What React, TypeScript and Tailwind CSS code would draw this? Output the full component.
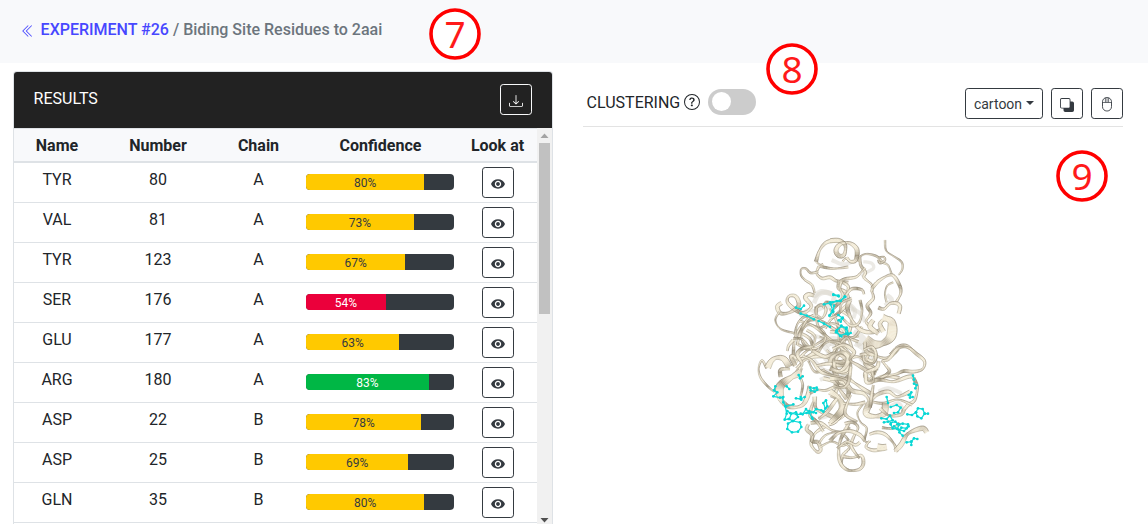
import React from "react";
import { BsChevronDoubleLeft, BsDownload, BsQuestionCircle, BsSubtract } from "react-icons/bs";
import { IoMdEye } from "react-icons/io";

type Row = { name: string; num: number; chain: string; conf: number };

const rows: Row[] = [
  { name: "TYR", num: 80, chain: "A", conf: 80 },
  { name: "VAL", num: 81, chain: "A", conf: 73 },
  { name: "TYR", num: 123, chain: "A", conf: 67 },
  { name: "SER", num: 176, chain: "A", conf: 54 },
  { name: "GLU", num: 177, chain: "A", conf: 63 },
  { name: "ARG", num: 180, chain: "A", conf: 83 },
  { name: "ASP", num: 22, chain: "B", conf: 78 },
  { name: "ASP", num: 25, chain: "B", conf: 69 },
  { name: "GLN", num: 35, chain: "B", conf: 80 },
];

const columns = "grid grid-cols-[86px_116px_85px_159px_77px]";

function barColor(conf: number) {
  if (conf > 80) return "bg-[#00b745] text-white";
  if (conf < 60) return "bg-[#eb003b] text-white";
  return "bg-[#ffc900] text-[#343a40]";
}

function Badge({ n, place }: { n: number; place: string }) {
  return (
    <svg width="52" height="52" viewBox="0 0 52 52" className={`absolute ${place}`}>
      <circle cx="26" cy="26" r="24" fill="white" stroke="#ff0000" strokeWidth="3.6" />
      <text
        x="26"
        y="40"
        textAnchor="middle"
        fill="#ff1a1a"
        className="font-['Noto_Sans',sans-serif] text-[37px]"
      >
        {n}
      </text>
    </svg>
  );
}

function MouseIcon() {
  return (
    <svg width="10" height="15" viewBox="0 0 10 15" fill="none" stroke="#343a40" strokeWidth="0.9" className="mt-[2px]">
      <rect x="0.5" y="0.5" width="9" height="13.5" rx="4.3" />
      <path d="M0.5 5.5h9M5 0.5v5M3.4 1v4.4M6.6 1v4.4" strokeWidth="0.7" />
    </svg>
  );
}

/* Ribbon: control points and width, in thirds of a pixel within a tile. */
type Ribbon = [string, number];
type Tile = { x: number; y: number; faint: Ribbon[]; ribbons: Ribbon[]; residues: string[] };

const tiles: Tile[] = [
  {
    x: 150,
    y: 195,
    faint: [
      ["100,165 120,195 105,215", 16],
      ["195,160 225,180 210,205", 16],
      ["140,290 175,305 165,325", 14],
      ["70,20 95,5 125,12", 16],
      ["175,40 195,60 190,85", 12],
      ["120,160 150,170 185,165", 12],
    ],
    ribbons: [
      ["150,60 182,86 176,130 150,150", 7],
      ["130,320 146,280 134,240 142,200 168,190 178,212 160,224 144,212", 12],
      ["134,236 160,248 178,236 176,212", 12],
      ["136,262 160,274 178,260", 14],
      ["160,280 176,300 172,328", 10],
      ["10,200 16,140 48,96 82,90", 7],
      ["78,50 84,108 118,150 150,168", 7],
      ["20,236 50,206 100,200 148,216 200,200 232,218 262,242", 8],
      ["88,140 130,152 172,148 206,138", 5],
      ["8,228 42,190 78,164 112,144", 6],
      ["110,180 132,208 120,242", 4],
      ["164,150 158,200", 4],
      ["150,150 152,196", 4],
      ["55,212 74,245 104,240", 6],
      ["238,190 226,222 250,240 242,266 226,262 230,244 258,250", 9],
      ["236,180 256,194 250,215 232,208", 10],
      ["210,196 240,192 290,205 326,176", 8],
      ["246,274 290,260 328,264", 8],
      ["178,268 222,298 252,316", 9],
      ["100,240 132,262 150,292", 6],
      ["30,128 62,150 70,196", 7],
      ["18,160 60,178 75,140 50,120", 6],
      ["40,104 70,85 104,98 150,130 190,142 216,110", 6],
    ],
    residues: [],
  },
  {
    x: 0,
    y: 0,
    faint: [
      ["222,235 235,210 262,202 282,215 270,240 245,248 222,260", 14],
      ["180,275 205,255 230,262", 12],
      ["250,350 280,340 310,350", 14],
      ["212,330 245,340 270,365", 12],
    ],
    ribbons: [
      ["240,124 280,131 325,126", 6],
      ["228,110 240,74 262,51 298,48 316,58", 9],
      ["237,124 230,145 246,160 270,157 290,168 325,172", 8],
      ["228,110 240,120 250,118", 6],
      ["224,204 216,180 195,165 183,150 184,132 198,131 212,144 235,140", 5],
      ["125,234 112,245 122,265 150,262 176,242 168,215 148,213 142,230 160,250 190,264 214,244 196,218 206,208 222,212", 10],
      ["120,258 106,285 122,312 165,325", 4],
      ["165,330 172,298 195,275 230,282 262,300 300,322", 6],
      ["190,310 210,300 248,318 255,346 228,370 195,362 183,330 190,310", 6],
      ["228,270 230,248 245,240 258,254 248,278 232,272", 7],
      ["298,165 296,190 318,202 326,230 300,260 274,282 255,310", 8],
      ["304,170 325,186 312,215 285,235 258,232 250,250", 7],
      ["160,345 146,362 142,378", 8],
      ["178,288 215,300 262,335 318,380", 6],
      ["268,250 290,290 296,340 280,385", 6],
      ["172,360 180,325 200,285 222,270", 7],
      ["232,388 255,355 288,350 325,362", 5],
      ["160,340 190,345 225,390", 5],
      ["240,310 275,295 305,310 326,342", 6],
      ["308,110 317,100 328,106", 6],
    ],
    residues: [
      "168,248 182,252 192,242",
      "182,266 200,272 222,283",
      "280,210 296,214",
      "252,238 278,232 298,228 316,216",
      "272,238 278,256 268,272",
      "236,288 252,296 270,306",
      "290,316 304,304 320,308 324,326",
      "288,322 304,334",
      "296,286 308,278",
    ],
  },
  {
    x: 270,
    y: 0,
    faint: [
      ["5,105 40,118 70,108", 12],
      ["100,110 125,115 130,130 105,145 95,155", 10],
      ["170,210 185,225 165,242", 14],
      ["70,320 100,342 80,360", 18],
      ["65,250 90,265 105,290", 12],
      ["25,210 50,230 72,260", 12],
    ],
    ribbons: [
      ["0,47 28,47 46,62 42,90 26,92 18,76 30,58 58,54 80,72 78,105 62,110 50,98", 11],
      ["165,45 168,76 188,92 214,110 217,132 206,150", 4],
      ["84,110 92,94 110,87 140,94 158,112 175,122 186,152", 5],
      ["145,98 162,96 164,107 150,114 146,104", 6],
      ["90,95 92,120 106,142 102,158 126,180 125,200", 7],
      ["28,170 45,162 78,156 95,140 105,128", 7],
      ["126,190 150,165 186,150 208,180 212,205 198,232", 8],
      ["170,232 165,206 172,182 190,172", 4],
      ["34,170 30,190 40,215 25,235 10,250", 8],
      ["125,198 130,220 112,242 122,265 108,290 126,308", 8],
      ["45,215 65,192 95,194 102,208", 7],
      ["60,225 52,250 66,285 92,315 130,322 158,308", 10],
      ["90,225 96,260 86,295 62,302 40,282", 6],
      ["145,248 162,252 180,236 200,235 210,245 206,266", 9],
      ["158,278 184,290 184,332 160,354 130,358 106,344", 25],
      ["158,285 150,298 160,320", 12],
      ["130,285 120,305 145,326", 12],
      ["0,320 38,326 64,342 85,350", 7],
      ["0,280 28,265 35,235 65,220", 6],
      ["15,388 34,352 54,340 72,388", 6],
      ["180,388 204,366 230,363 260,388", 8],
      ["105,350 108,378 128,390", 9],
      ["0,350 30,355 62,388", 5],
    ],
    residues: [
      "10,208 25,212",
      "0,232 20,228 32,228 44,214",
      "0,270 10,260 12,242",
      "25,270 38,280 32,290",
      "20,318 34,302 48,312 48,326 30,332 20,318",
      "54,328 62,324",
    ],
  },
  {
    x: 0,
    y: 360,
    faint: [
      ["220,45 250,75 285,80", 14],
      ["285,55 320,75 300,105", 18],
      ["235,220 270,210", 14],
      ["240,105 276,90 312,92", 12],
    ],
    ribbons: [
      ["166,62 154,34 180,42 205,34 236,16", 10],
      ["80,70 66,46 56,70 62,98 84,125 104,142", 5],
      ["83,68 94,48 110,38 132,42 148,66", 16],
      ["170,80 186,58 172,30 185,12 215,5", 9],
      ["186,70 180,92 188,120 182,154", 5],
      ["122,160 120,125 150,100 182,82", 21],
      ["118,160 140,182 166,187 190,178 204,150 209,123", 11],
      ["122,96 122,74 150,72", 9],
      ["210,145 232,135 258,136 298,122 326,130", 7],
      ["190,34 215,46 242,80 280,92 326,105", 8],
      ["230,62 268,56 305,62 328,50", 8],
      ["220,18 255,35 285,24 318,44 320,76 288,80 282,50", 9],
      ["250,100 282,110 300,135 320,162", 9],
      ["224,155 228,190 260,207 294,220 320,205", 10],
      ["275,148 298,165 306,192 284,228 266,238", 17],
      ["236,222 262,200 284,170 300,150", 9],
      ["205,238 200,254 216,270 214,300 232,321 242,314 234,292 216,288 226,264 258,242", 9],
      ["212,234 242,234 276,256 308,262 328,246", 8],
      ["236,296 258,270 300,262 326,286", 5],
      ["240,306 275,290 306,302 326,292", 5],
      ["310,292 328,308 309,330 304,360 326,375", 7],
      ["220,170 210,210 230,230 250,260", 8],
    ],
    residues: [
      "106,124 102,136 112,142 100,154 120,158 130,156",
      "128,158 130,172 138,184 160,178",
      "136,184 140,206 134,224 148,222 154,206 168,202 174,216 160,228 146,222",
      "158,228 144,236 142,252 156,262 174,260 184,246 180,232 158,228",
      "142,198 150,204 170,208 188,208 198,192 208,204 216,218 218,222",
      "182,206 200,204 220,202 228,192 244,196 250,200 262,184 258,166 250,174 256,190",
      "168,160 182,162 194,156",
      "182,156 184,164",
      "210,128 222,130 230,128",
      "212,136 224,140 232,134",
      "140,124 148,132",
      "176,90 180,100 188,94",
      "208,198 228,204",
    ],
  },
  {
    x: 270,
    y: 360,
    faint: [
      ["10,130 42,115 50,85", 14],
      ["100,5 122,5 130,32 110,55 90,40", 12],
      ["145,140 175,130 215,145", 12],
      ["180,185 205,175 220,195", 12],
    ],
    ribbons: [
      ["132,104 152,100 178,80 166,60 158,48 176,42 204,10 234,8 260,27 283,48 278,72 250,80 222,78 196,88 160,94 132,106", 8],
      ["120,112 150,104 190,110 232,96 252,94", 9],
      ["250,98 262,128 254,165 234,180 218,200", 8],
      ["0,70 28,78 48,62 54,36 35,22 8,35 0,52", 11],
      ["8,12 40,0 72,20 60,44 86,62 115,80 130,94", 9],
      ["100,15 126,6 138,28 130,54 104,50 100,30", 7],
      ["110,80 140,68 146,48", 9],
      ["108,88 110,112 130,108 126,80", 9],
      ["0,100 42,106 65,136 102,146 120,170", 11],
      ["10,122 38,128 55,112 62,66", 8],
      ["120,174 140,150 175,140 202,155 240,140", 9],
      ["124,170 160,175 204,164 246,180", 6],
      ["120,172 108,205 132,214 162,206 166,174", 16],
      ["98,178 82,204 92,232 110,250 104,288 122,290", 4],
      ["0,140 28,160 38,190 12,222 0,232", 16],
      ["40,175 75,178 106,172", 8],
      ["130,120 125,150 120,188", 8],
      ["56,236 30,290 28,344 50,374 86,374 100,356 94,332 66,338 38,334", 8],
      ["44,236 68,232 84,248 70,278 64,304 88,340", 7],
      ["0,288 24,265 58,258 90,270 104,288", 9],
      ["22,310 50,290 76,300 90,292", 7],
      ["118,288 108,306 132,316 166,310", 8],
      ["118,268 142,262 168,270 194,300 198,320", 8],
      ["196,318 214,298 230,270 254,256 280,250 290,262", 12],
      ["142,306 156,308 170,306", 17],
      ["150,190 178,212 214,208 222,192", 8],
      ["156,248 188,250 210,235", 8],
      ["82,230 45,205 62,150", 7],
    ],
    residues: [
      "249,92 252,104",
      "252,116 260,120 256,130",
      "236,150 244,142 240,158 248,156",
      "170,156 174,174",
      "182,186 200,180 212,188 204,202 192,204",
      "232,208 246,210 258,202 264,190 278,192 284,206 274,220 262,214 258,202",
      "284,206 294,206",
      "154,220 170,222 180,212 188,226 174,230 162,232",
      "182,234 196,230 208,238 202,252 188,250 182,238",
      "202,238 218,236 234,238 230,250 214,248 208,262 218,272",
      "192,244 206,254 222,258 236,244",
      "230,292 244,290 252,280 262,282",
      "244,290 244,300",
    ],
  },
];

/* Catmull-Rom samples along the control points. */
function sample(points: string): number[][] {
  const p = points.split(" ").map((s) => s.split(",").map(Number));
  const out: number[][] = [];
  for (let i = 0; i < p.length - 1; i++) {
    const a = p[Math.max(i - 1, 0)];
    const b = p[i];
    const c = p[i + 1];
    const e = p[Math.min(i + 2, p.length - 1)];
    const n = Math.max(4, Math.round(Math.hypot(c[0] - b[0], c[1] - b[1]) / 4));
    for (let k = 0; k < n; k++) {
      const t = k / n;
      out.push(
        [0, 1].map(
          (j) =>
            0.5 *
            (2 * b[j] +
              (c[j] - a[j]) * t +
              (2 * a[j] - 5 * b[j] + 4 * c[j] - e[j]) * t * t +
              (3 * b[j] - a[j] - 3 * c[j] + e[j]) * t * t * t),
        ),
      );
    }
  }
  out.push(p[p.length - 1]);
  return out;
}

const line = (pts: number[][]) => "M" + pts.map((q) => `${q[0].toFixed(1)} ${q[1].toFixed(1)}`).join("L");

function mix(v: number) {
  const dark = [138, 128, 106];
  const light = [244, 236, 217];
  return `rgb(${dark.map((d, i) => Math.round(d + (light[i] - d) * v)).join(",")})`;
}

/* A band that twists: its width and its shade change along the curve. */
function RibbonPath({ ribbon, seed }: { ribbon: Ribbon; seed: number }) {
  const [points, w] = ribbon;
  const pts = sample(points);
  const left: number[][] = [];
  const right: number[][] = [];
  const tone: number[] = [];
  let s = seed * 17;
  pts.forEach((q, i) => {
    const a = pts[Math.max(i - 1, 0)];
    const b = pts[Math.min(i + 1, pts.length - 1)];
    const len = Math.hypot(b[0] - a[0], b[1] - a[1]) || 1;
    s += len / 2;
    const nx = -(b[1] - a[1]) / len;
    const ny = (b[0] - a[0]) / len;
    const h = (w / 2) * (0.6 + 0.55 * Math.abs(Math.cos(s / 30)));
    left.push([q[0] + nx * h, q[1] + ny * h]);
    right.push([q[0] - nx * h, q[1] - ny * h]);
    const v = 0.5 + 0.5 * Math.sin(s / 13) * Math.cos(s / 31);
    tone.push(Math.min(1, 0.2 + Math.sqrt(v)));
  });
  return (
    <g>
      {left.slice(1).map((q, i) => (
        <path
          key={i}
          d={line([left[i], q, right[i + 1], right[i]]) + "Z"}
          fill={mix(tone[i])}
          stroke={mix(tone[i])}
          strokeWidth="0.7"
        />
      ))}
      <path d={line(left)} stroke="#80765f" strokeWidth="1.4" strokeOpacity="0.75" />
      <path d={line(right)} stroke="#6f6653" strokeWidth="1.8" strokeOpacity="0.8" />
    </g>
  );
}

function Protein() {
  return (
    <svg width="200" height="255" viewBox="0 0 600 765" fill="none" strokeLinejoin="round">
      {tiles.map((t, i) => (
        <g key={i} transform={`translate(${t.x} ${t.y})`}>
          {t.faint.map(([pts, w], k) => (
            <path key={k} d={line(sample(pts))} stroke="#d9d5cc" strokeOpacity="0.5" strokeWidth={w} />
          ))}
        </g>
      ))}
      {tiles.map((t, i) => (
        <g key={i} transform={`translate(${t.x} ${t.y})`}>
          {t.ribbons.map((r, k) => (
            <RibbonPath key={k} ribbon={r} seed={k + i * 5} />
          ))}
        </g>
      ))}
      {tiles.map((t, i) => (
        <g key={i} transform={`translate(${t.x} ${t.y})`}>
          {t.residues.map((pts, k) => (
            <g key={k}>
              <polyline points={pts} stroke="#0fdcd9" strokeWidth="3.8" />
              {pts.split(" ").map((s, j) => {
                const [cx, cy] = s.split(",");
                return <circle key={j} cx={cx} cy={cy} r="4" fill="#08d6d4" />;
              })}
            </g>
          ))}
        </g>
      ))}
    </svg>
  );
}

const outlineButton =
  "flex h-[31px] items-center justify-center rounded-[3.2px] border border-[#343a40] text-[#343a40]";

export default function App() {
  return (
    <div className="relative flex h-[524px] w-[1148px] flex-col overflow-hidden bg-white font-['Roboto',sans-serif] text-base text-[#212529]">
      <header className="flex h-[63px] shrink-0 items-start bg-[#f8f9fb] pl-[21px] pt-[18px] font-medium leading-6 text-[#6c757d]">
        <BsChevronDoubleLeft className="mr-[5.6px] mt-[6px] size-[14px] text-[#4747ff]" />
        <span className="text-[#4747ff]">EXPERIMENT #26</span>
        <span className="whitespace-pre"> / Biding Site Residues to 2aai</span>
      </header>

      <main className="flex min-h-0 flex-1 pl-[13px] pt-2">
        <section className="flex w-[540px] shrink-0 flex-col overflow-hidden rounded-t-[4px] border border-b-0 border-[#dee2e6]">
          <div className="flex h-14 shrink-0 items-center justify-between bg-[#222] pl-[19.6px] pr-5 text-white">
            <span className="-mt-0.5">RESULTS</span>
            <button className="-mt-px flex h-[31px] w-8 items-center justify-center rounded-[3.2px] border border-[#f8f9fa]">
              <BsDownload className="mt-[3px] size-[14px]" />
            </button>
          </div>
          <div className="flex min-h-0 flex-1">
            <div className="w-[523px] shrink-0 overflow-hidden text-center leading-6">
              <div className={`${columns} h-[35px] border-b-2 border-t border-[#dee2e6] bg-[#f8f9fb] pt-[5px] font-bold`}>
                <span>Name</span>
                <span>Number</span>
                <span>Chain</span>
                <span>Confidence</span>
                <span className="-ml-0.5">Look at</span>
              </div>
              {rows.map((r, i) => (
                <div key={i} className={`${columns} h-10 border-b border-[#dee2e6] pt-[4px]`}>
                  <span className="mt-px">{r.name}</span>
                  <span className="mt-px">{r.num}</span>
                  <span className="mt-px">{r.chain}</span>
                  <div className="pl-[5px] pr-1.5 pt-[7px]">
                    <div className="flex h-4 overflow-hidden rounded-[4px] bg-[#343a40]">
                      <div
                        className={`flex items-center justify-center text-xs leading-none ${barColor(r.conf)}`}
                        style={{ width: `${r.conf}%` }}
                      >
                        <span className="mt-[2px]">{r.conf}%</span>
                      </div>
                    </div>
                  </div>
                  <button className={`${outlineButton} ml-[22px] w-8`}>
                    <IoMdEye className="mt-[3px] size-4" />
                  </button>
                </div>
              ))}
            </div>
            <div className="flex flex-1 flex-col items-center bg-[#f1f1f1]">
              <svg width="15" height="15" viewBox="0 0 15 15" className="shrink-0">
                <path d="M3.5 10 7.5 5.5 11.5 10z" fill="#a3a3a3" />
              </svg>
              <div className="h-[171px] w-[11px] shrink-0 bg-[#c1c1c1]" />
              <div className="flex-1" />
              <svg width="15" height="8" viewBox="0 0 15 8" className="shrink-0">
                <path d="M3.5 2h8L7.5 6.5z" fill="#505050" />
              </svg>
            </div>
          </div>
        </section>

        <section className="ml-[30px] flex w-[540px] shrink-0 flex-col">
          <div className="flex h-14 shrink-0 items-center border-b border-[#e3e3e3] pl-[3.6px]">
            <span className="mt-[9px]">CLUSTERING</span>
            <BsQuestionCircle className="ml-[3.5px] mt-[7px] size-4" />
            <div className="ml-2 mt-[6px] flex h-[26px] w-12 items-center rounded-full bg-[#ccc] pl-1">
              <div className="size-[19px] rounded-full bg-white" />
            </div>
            <div className="ml-auto mt-[9px] flex gap-2">
              <button className={`${outlineButton} w-[78px] text-sm`}>
                <span className="mt-px">cartoon</span>
                <svg width="8" height="4" viewBox="0 0 8 4" className="ml-[4px]">
                  <path d="M0 0h8L4 4z" fill="currentColor" />
                </svg>
              </button>
              <button className={`${outlineButton} w-8`}>
                <BsSubtract className="mt-[3px] size-[14px]" />
              </button>
              <button className={`${outlineButton} w-8`}>
                <MouseIcon />
              </button>
            </div>
          </div>
          <div className="pl-[157px] pt-[98px]">
            <Protein />
          </div>
        </section>
      </main>

      <Badge n={7} place="left-[429px] top-[8px]" />
      <Badge n={8} place="left-[766px] top-[43px]" />
      <Badge n={9} place="left-[1056px] top-[150px]" />
    </div>
  );
}
